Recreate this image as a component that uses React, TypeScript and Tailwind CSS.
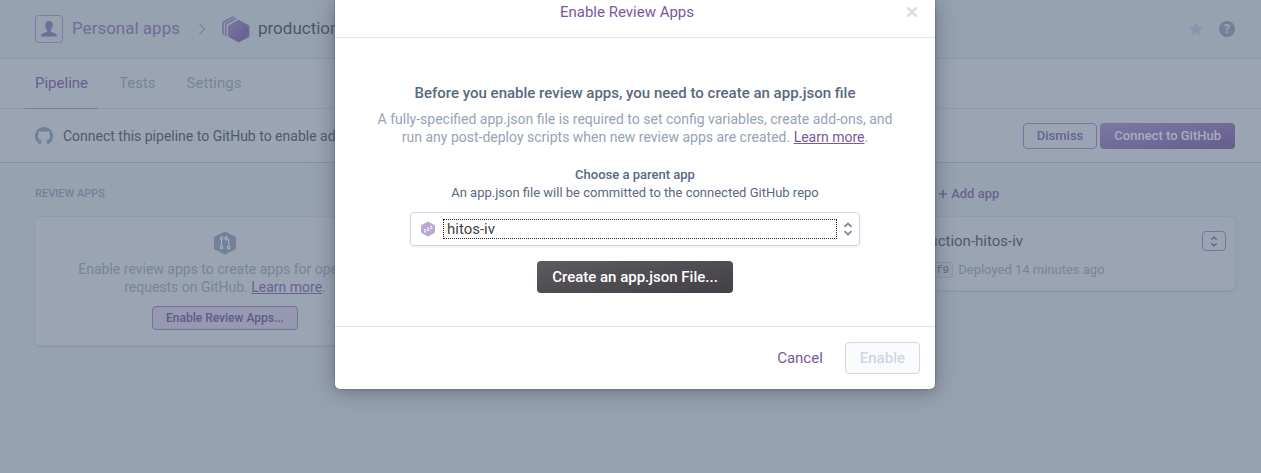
import type { ReactNode } from "react";

function UpDown({ className }: { className: string }) {
  return (
    <svg viewBox="0 0 10 14" className={className} fill="none" stroke="currentColor" strokeWidth="1.8" aria-hidden="true">
      <path d="M1.500 4.800 5 1.500 8.500 4.800M1.500 9.200 5 12.500 8.500 9.200" />
    </svg>
  );
}

function PersonIcon() {
  return (
    <svg viewBox="0 0 28 28" className="size-7" aria-hidden="true">
      <rect x="0.500" y="0.500" width="27" height="27" rx="3" fill="none" stroke="#7d7aa5" />
      <path
        fill="#716c98"
        d="M14 6c2.500 0 3.700 1.700 3.700 4.200 0 2-.8 3.800-1.900 4.800v1.500c0 .7 4.300 1.500 5.300 2.600.7.700.8 1.500.8 2.400H6.100c0-.9.1-1.700.8-2.400 1-1.100 5.300-1.900 5.300-2.600V15c-1.100-1-1.900-2.800-1.900-4.800C10.300 7.700 11.500 6 14 6z"
      />
    </svg>
  );
}

function PipelineIcon() {
  return (
    <svg viewBox="0 0 28 27" className="h-[27px] w-7" aria-hidden="true">
      <defs>
        <linearGradient id="pipe" x1="0" y1="0" x2="1" y2="1">
          <stop offset="0" stopColor="#7b77a4" />
          <stop offset="1" stopColor="#635c8c" />
        </linearGradient>
      </defs>
      <path fill="none" stroke="#7b77a4" strokeWidth="1.900" d="M1 18.500V6.300L11.500.9M3.800 20V7.700L14.200 2.300" />
      <path fill="url(#pipe)" stroke="url(#pipe)" strokeLinejoin="round" d="M16.700 4.200 26.800 9.800v10.600l-10.100 5.600-10-5.600V9.800z" />
    </svg>
  );
}

function SleepingHexIcon() {
  return (
    <svg viewBox="0 0 14 16" className="h-4 w-3.5 shrink-0" aria-hidden="true">
      <path fill="#bba7d3" stroke="#bba7d3" strokeLinejoin="round" d="M7 1 13.400 4.400v7.200L7 15 .6 11.600V4.400z" />
      <path fill="none" stroke="#fff" strokeWidth=".9" d="M2.800 8.500h2L3.300 11h2M6 7h2L6.500 9.500h2M9 5.200h2L9.500 7.700h2" />
    </svg>
  );
}

function PullRequestIcon() {
  return (
    <svg viewBox="0 0 22 24" className="h-6 w-[22px]" aria-hidden="true">
      <path fill="#718199" stroke="#718199" strokeLinejoin="round" d="M11 1 21.500 6.200v11.600L11 23 .5 17.800V6.200z" />
      <g fill="none" stroke="#a3adbd" strokeWidth="1.200">
        <circle cx="7.500" cy="7.200" r="1.300" />
        <circle cx="7.500" cy="16.500" r="1.300" />
        <circle cx="14.700" cy="16.500" r="1.300" />
        <path d="M7.500 8.500v6.700M14.700 15.200V9.500q0-2.200-2.200-2.200h-1.300M13 5l-2.200 2.300L13 9.500" />
      </g>
    </svg>
  );
}

function GithubMark() {
  return (
    <svg viewBox="0 0 16 16" className="size-[18px]" fill="#6f8099" aria-hidden="true">
      <path
        fillRule="evenodd"
        d="M8 0C3.580 0 0 3.580 0 8c0 3.540 2.290 6.530 5.470 7.590V12.700c-1.700.2-2.200-.5-2.500-1.100 1.100.1 1.300 1.200 2.500 1 .1-.5.300-.9.500-1.100-1.780-.2-3.440-.99-3.440-3.750 0-.87.31-1.590.82-2.150-.08-.2-.36-1.020.08-2.120 0 0 .67-.21 2.200.82.64-.18 1.600-.27 2.370-.27s1.700.09 2.370.27c1.530-1.040 2.200-.82 2.200-.82.44 1.100.16 1.920.08 2.120.51.56.82 1.270.82 2.150 0 2.870-1.670 3.550-3.450 3.750.29.25.54.73.54 1.480v2.610A8.010 8.010 0 0 0 16 8c0-4.420-3.580-8-8-8z"
      />
    </svg>
  );
}

function Card({ children, className }: { children: ReactNode; className: string }) {
  return <div className={`rounded-[5px] border border-[#919dad] bg-[#9ba4b3] shadow-[0_1px_1px_rgba(120,135,155,0.4)] ${className}`}>{children}</div>;
}

function Page() {
  return (
    <div className="min-h-screen bg-[#96a2b0]">
      <header className="flex h-[59px] items-center border-b border-[#8c99a9] pr-[26px] pl-[35px]">
        <PersonIcon />
        <a href="#personal" className="ml-[9px] text-[17px] text-[#706b98]">Personal apps</a>
        <svg viewBox="0 0 8 12" className="mr-4 ml-[18px] h-3 w-2" fill="none" stroke="#77869b" strokeWidth="1.300" aria-hidden="true">
          <path d="M1.500 1 6.500 6l-5 5" />
        </svg>
        <PipelineIcon />
        <h1 className="ml-2 text-[17px] text-[#4d5767]">production-hitos</h1>
        <button type="button" aria-label="Favorite" className="ml-auto text-[#8796ad]">
          <svg viewBox="0 0 16 16" className="size-4" fill="currentColor" aria-hidden="true">
            <path d="m8 .8 1.900 5.100 5.500.2-4.300 3.400 1.500 5.300L8 11.800l-4.600 3 1.500-5.300L.6 6.100l5.500-.2z" />
          </svg>
        </button>
        <button type="button" aria-label="Help" className="ml-[15px] flex size-4 items-center justify-center rounded-full bg-[#718198] text-[13px] font-bold text-[#9aa5b4]">
          ?
        </button>
      </header>

      <nav className="flex h-[50px] gap-[11px] border-b border-[#8f9bab] bg-[#9ba4b3] pl-[25px] text-[15px] text-[#75859a]">
        <a href="#pipeline" className="-mb-px flex items-center border-b border-[#7d78a6] px-2.5 text-[#655f8e]">Pipeline</a>
        <a href="#tests" className="flex items-center px-2.5">Tests</a>
        <a href="#settings" className="flex items-center px-2.5">Settings</a>
      </nav>

      <section className="flex h-[54px] items-center border-b border-[#8491a3] bg-[#9ba4b3] pr-[26px] pl-[35px]">
        <GithubMark />
        <p className="ml-2.5 text-sm text-[#4f5a6a]">Connect this pipeline to GitHub to enable additional features</p>
        <button type="button" className="ml-auto h-[26px] rounded-[4px] border border-[#7874a1] px-[13px] text-[13px] font-medium text-[#69638f]">Dismiss</button>
        <button type="button" className="ml-[3px] h-[26px] rounded-[4px] bg-linear-to-br from-[#7c78a4] to-[#655e8c] px-3.5 text-[13px] font-medium text-[#a7adc0]">
          Connect to GitHub
        </button>
      </section>

      <main className="grid grid-cols-3 gap-7 pt-[23px] pr-[25px] pl-[34px]">
        <section>
          <h2 className="pl-px text-[11px] leading-4 font-medium text-[#72819a]">REVIEW APPS</h2>
          <Card className="mt-3.5 flex h-[130px] flex-col items-center pt-3.5">
            <PullRequestIcon />
            <p className="mt-[5px] text-center text-[14px] leading-[18px] whitespace-nowrap text-[#75859a]">
              Enable review apps to create apps for open pull
              <br />
              requests on GitHub. <a href="#review" className="text-[#69638f] underline">Learn more</a>.
            </p>
            <button type="button" className="mt-2.5 h-6 rounded-[4px] border border-[#7570a0] bg-[#9699b0] px-[13px] text-[12px] font-medium text-[#625a8b]">
              Enable Review Apps...
            </button>
          </Card>
        </section>
        <section className="col-start-3">
          <div className="flex h-4 items-center pl-px text-[11px] leading-4 font-medium text-[#72819a]">
            <h2>PRODUCTION</h2>
            <button type="button" className="ml-4 flex items-center gap-1 text-[13px] text-[#69638f]">
              <svg viewBox="0 0 8 8" className="size-2" stroke="currentColor" strokeWidth="1.600" aria-hidden="true">
                <path d="M4 0v8M0 4h8" />
              </svg>
              Add app
            </button>
          </div>
          <Card className="mt-3.5 h-[75px] pt-3.5 pr-[9px] pl-11">
            <div className="flex h-5 items-center justify-between">
              <a href="#app" className="text-[15px] text-[#4f5a6a]">production-hitos-iv</a>
              <button type="button" aria-label="App actions" className="flex h-5 w-6 items-center justify-center rounded-[4px] border border-[#7874a1] text-[#69638f]">
                <UpDown className="h-[11px] w-2" />
              </button>
            </div>
            <div className="mt-[11px] flex items-center text-[13px] leading-4 text-[#75859a]">
              <code className="rounded-[3px] border border-[#8595aa] bg-[#96a2b2] px-[3px] font-['Liberation_Mono'] text-[11px] leading-[14px] text-[#5d6b80]">6c1a8f9</code>
              <span className="ml-[5px]">Deployed 14 minutes ago</span>
            </div>
          </Card>
        </section>
      </main>
    </div>
  );
}

function ReviewAppsDialog() {
  return (
    <div className="absolute inset-0 flex items-start justify-center overflow-hidden pl-[9px]">
      <div role="dialog" aria-labelledby="dialog-title" className="w-[600px] rounded-b-[5px] bg-white text-[#596981] shadow-[0_2px_20px_rgba(70,75,95,0.6),0_0_2px_rgba(50,55,65,0.6)]">
        <div className="relative h-[38px] border-b border-[#e3e4e8] pr-4 text-center">
          <h2 id="dialog-title" className="text-[15px] leading-6 text-[#79589f]">Enable Review Apps</h2>
          <button type="button" aria-label="Close" className="absolute top-1.5 right-[17px] text-[#d8dbe4]">
            <svg viewBox="0 0 12 12" className="size-3" stroke="currentColor" strokeWidth="2.200" aria-hidden="true">
              <path d="m1.200 1.200 9.600 9.600M10.800 1.200l-9.600 9.600" />
            </svg>
          </button>
        </div>

        <div className="flex h-[288px] flex-col items-center pt-[45px] text-center">
          <h3 className="text-[15px] leading-5 font-medium">Before you enable review apps, you need to create an app.json file</h3>
          <p className="mt-[7px] text-[14px] leading-[18px] text-[#96a3b6]">
            A fully-specified app.json file is required to set config variables, create add-ons, and
            <br />
            run any post-deploy scripts when new review apps are created. <a href="#learn" className="text-[#79589f] underline">Learn more</a>.
          </p>
          <label htmlFor="parent-app" className="mt-5 text-[13px] leading-[18px]">
            <span className="block font-medium">Choose a parent app</span>
            An app.json file will be committed to the connected GitHub repo
          </label>
          <div className="mt-2.5 flex h-[34px] w-[450px] items-center rounded-[4px] border border-[#cfd7e6] pr-1.5 pl-2.5 shadow-[0_1px_2px_rgba(207,215,230,0.5)]">
            <SleepingHexIcon />
            <select id="parent-app" className="mr-1.5 ml-2 h-5 min-w-0 flex-1 appearance-none border border-dotted border-[#222] bg-white pl-[3px] text-[15px] leading-[18px] text-[#3f3f44] outline-none">
              <option>hitos-iv</option>
            </select>
            <UpDown className="h-3.5 w-2.5 text-[#888594]" />
          </div>
          <button type="button" className="mt-[15px] h-8 rounded-[4px] bg-linear-to-br from-[#5d5b60] to-[#424046] px-[15px] text-[15px] font-medium text-white">
            Create an app.json File...
          </button>
        </div>

        <div className="flex h-[63px] items-center justify-end border-t border-[#e3e4e8] pr-[15px] text-[15px]">
          <button type="button" className="text-[#79589f]">Cancel</button>
          <button type="button" disabled className="ml-[22px] h-8 rounded-[4px] border border-[#cfd7e6] bg-[#fafbfd] px-3.5 font-medium text-[#cfd7e6]">Enable</button>
        </div>
      </div>
    </div>
  );
}

export default function App() {
  return (
    <div className="relative min-h-screen overflow-hidden font-['Roboto',sans-serif]">
      <Page />
      <ReviewAppsDialog />
    </div>
  );
}
